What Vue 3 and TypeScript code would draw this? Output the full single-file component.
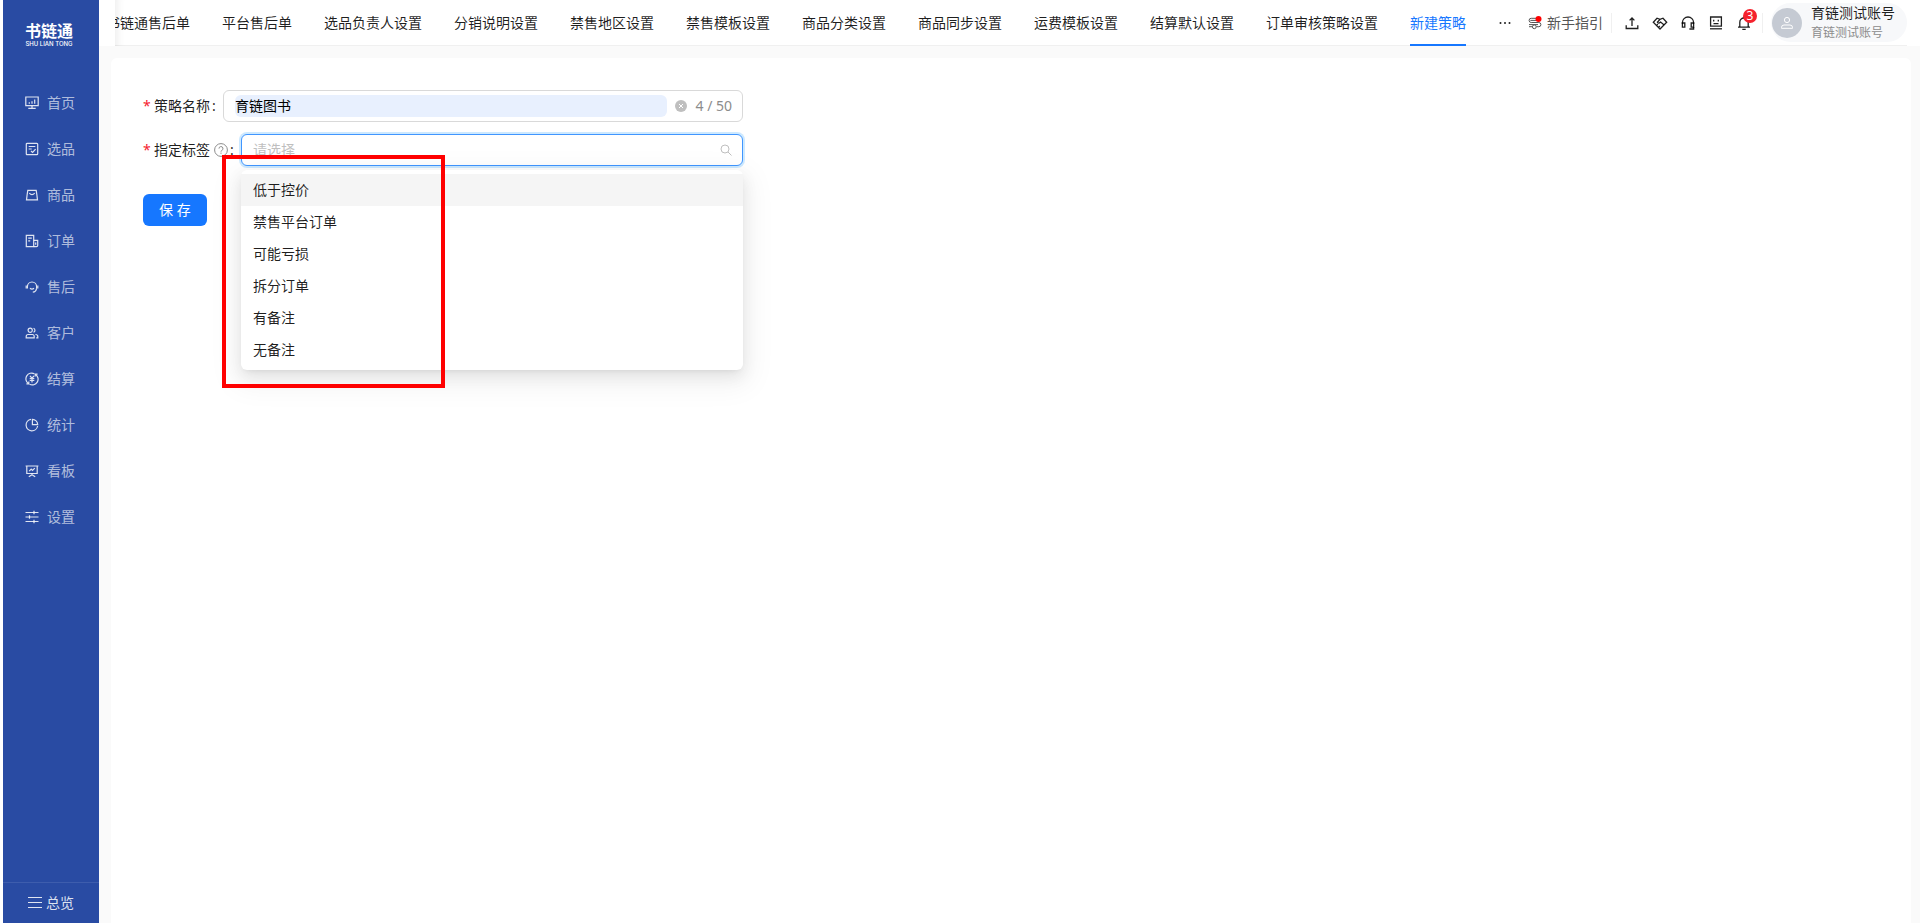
<script setup lang="ts">
import { ref } from 'vue'

interface MenuItem {
  label: string
  strokes: string[]
}

const menu: MenuItem[] = [
  {
    label: '首页',
    strokes: ['M.8 1h12.4v8.7H.8z', 'M4.3 6.3v1.4M7 5.3v2.4M9.7 3.5v4.2', 'M7 9.7v2.5M3.3 12.4h7.4'],
  },
  {
    label: '选品',
    strokes: ['M2.2 1.3h9.6q.9 0 .9.9v9.6q0 .9-.9.9H2.2q-.9 0-.9-.9V2.2q0-.9.9-.9z', 'M3.7 4.5h6.6M3.7 7h3', 'M6 9l1.6 1.5 3-3.4'],
  },
  {
    label: '商品',
    strokes: ['M2.8 2.3h8.4l.6 4 .7 5.6h-11l.7-5.6z', 'M4.3 5.2q2.7 3 5.4 0'],
  },
  {
    label: '订单',
    strokes: ['M1.3 1.3h7.4v11.4H1.3z', 'M8.7 6.3h4v5.2q0 1.2-1.2 1.2H8.7', 'M3.2 4.2h3.6M3.2 6.8h2', 'M10.7 8.6v2.2'],
  },
  {
    label: '售后',
    strokes: ['M2.4 8.4V6.6a4.6 4.6 0 0 1 9.2 0v1.8', 'M1.2 5.6v3M12.8 5.6v3', 'M11.6 8.4q-.5 3.6-3.8 3.8', 'M5 8.2q2 1.8 4 0'],
  },
  {
    label: '客户',
    strokes: ['M5.2 2.2a2.1 2.1 0 1 1 0 4.2a2.1 2.1 0 0 1 0-4.2z', 'M1.2 11.8v-1.4q0-1.9 1.9-1.9h4.2q1.9 0 1.9 1.9v1.4z', 'M8.5 2.3a2.1 2.1 0 0 1 0 4', 'M10.4 8.5q2.4 0 2.4 1.9v1.4h-1.6'],
  },
  {
    label: '结算',
    strokes: ['M3.4 11.6A5.8 5.8 0 0 1 9.4 1.7', 'M10.6 2.4A5.8 5.8 0 0 1 4.6 12.3', 'M1.4 11.9h2.4V9.5M12.6 2.1h-2.4v2.4', 'M5 3.8l2 2.4 2-2.4M4.7 6.6h4.6M4.7 8.5h4.6M7 6.4v4'],
  },
  {
    label: '统计',
    strokes: ['M6 1.3A5.8 5.8 0 1 0 12.6 8', 'M7.4 1.3a5.6 5.6 0 0 1 5.3 5.3H7.4z'],
  },
  {
    label: '看板',
    strokes: ['M.6 2h12.8M1.8 2v7.5h10.4V2', 'M4.2 7.2l2-2 1.3 1.3 2.3-2.3', 'M7 9.5v1.5M3.8 12.8l3.2-2.1 3.2 2.1'],
  },
  {
    label: '设置',
    strokes: ['M.5 2.5h13M.5 7h13M.5 11.5h13', 'M9 .8v3.4M4.5 5.3v3.4M9 9.8v3.4'],
  },
]

const tabs: string[] = [
  '书链通售后单',
  '平台售后单',
  '选品负责人设置',
  '分销说明设置',
  '禁售地区设置',
  '禁售模板设置',
  '商品分类设置',
  '商品同步设置',
  '运费模板设置',
  '结算默认设置',
  '订单审核策略设置',
  '新建策略',
]
const activeTab = ref('新建策略')

const tools: { name: string; strokes: string[] }[] = [
  { name: '上传', strokes: ['M2.2 10.2v3.3h11.6v-3.3', 'M8 11V3M5.6 5.4L8 3l2.4 2.4'] },
  { name: '合作', strokes: ['M8 14L1.3 7.3 5 3.2 8 4.4l3-1.2 3.7 4.1z', 'M8 4.4L5.4 7.2q1 1.9 3.2-.2l3.6 3', 'M6.6 12.2l1.2-1.2M4.6 10.4l1.3-1.3'] },
  { name: '客服', strokes: ['M2.4 9V7.6a5.6 5.6 0 0 1 11.2 0V9', 'M2.4 8h2.4v4.2H2.4zM11.2 8h2.4v4.2h-2.4z', 'M13.6 12v2H9.4'] },
  { name: '助手', strokes: ['M2.6 2h10.8v9.2H2.6z', 'M2 13.8h12', 'M5.7 4.8v1.7M10.3 4.8v1.7M5.5 8.6h5'] },
  { name: '通知', strokes: ['M3.8 12V7.2a4.2 4.2 0 0 1 8.4 0V12', 'M2 12.2h12M8 1.5v1.6M6.3 14.3h3.4'] },
]

const options: string[] = ['低于控价', '禁售平台订单', '可能亏损', '拆分订单', '有备注', '无备注']
const highlighted = ref(0)
const strategyName = ref('育链图书')
const tagQuery = ref('')
</script>

<template>
  <div class="app">
    <aside class="sidebar">
      <div class="logo">
        <span class="logo-name">书链通</span>
        <span class="logo-latin">SHU LIAN TONG</span>
      </div>
      <nav class="menu">
        <a v-for="item in menu" :key="item.label" href="#" class="menu-item">
          <svg class="menu-icon" viewBox="0 0 14 14" aria-hidden="true">
            <path v-for="d in item.strokes" :key="d" :d="d" />
          </svg>
          <span>{{ item.label }}</span>
        </a>
      </nav>
      <a href="#" class="overview">
        <svg class="overview-icon" viewBox="0 0 14 14" aria-hidden="true">
          <path d="M0 1.5h14M0 6.5h14M0 11.5h14" />
        </svg>
        <span>总览</span>
      </a>
    </aside>

    <div class="body">
      <header class="header">
        <div class="bar">
          <nav class="tabs">
            <div class="tab-track">
              <button
                v-for="tab in tabs"
                :key="tab"
                type="button"
                class="tab"
                :class="{ active: tab === activeTab }"
                @click="activeTab = tab"
              >{{ tab }}</button>
            </div>
          </nav>
          <button type="button" class="more" aria-label="更多">
            <svg viewBox="0 0 14 14" aria-hidden="true">
              <circle cx="2.5" cy="7" r="1" /><circle cx="7" cy="7" r="1" /><circle cx="11.5" cy="7" r="1" />
            </svg>
          </button>
          <a href="#" class="guide">
            <svg viewBox="0 0 14 14" aria-hidden="true">
              <path d="M8 2.3H3.2a2.1 2.1 0 0 0 0 4.2h7.6a2.1 2.1 0 0 1 0 4.2H8.4" />
              <path d="M2.4 4.4h6M1 8.6h9" />
              <circle cx="6.3" cy="10.8" r="1.9" />
              <path d="M1 10.7h3.4" />
              <circle class="guide-dot" cx="10.5" cy="3" r="3" />
            </svg>
            <span>新手指引</span>
          </a>
          <span class="divider"></span>
          <div class="tools">
            <button v-for="tool in tools" :key="tool.name" type="button" class="tool" :aria-label="tool.name">
              <svg viewBox="0 0 16 16" aria-hidden="true">
                <path v-for="d in tool.strokes" :key="d" :d="d" />
              </svg>
              <span v-if="tool.name === '通知'" class="badge">3</span>
            </button>
          </div>
          <span class="divider"></span>
          <button type="button" class="user">
            <span class="avatar">
              <svg viewBox="0 0 14 14" aria-hidden="true">
                <circle cx="7" cy="4" r="2.6" />
                <path d="M1.5 12.3v-.8q0-2.5 2.5-2.5h6q2.5 0 2.5 2.5v.8z" />
              </svg>
            </span>
            <span class="user-text">
              <span class="user-name">育链测试账号</span>
              <span class="user-sub">育链测试账号</span>
            </span>
          </button>
        </div>
      </header>

      <main class="card">
        <form class="form" @submit.prevent>
          <div class="row">
            <label class="label" for="strategy-name"><span class="star">*</span>策略名称<span class="colon">:</span></label>
            <div class="field">
              <input id="strategy-name" v-model="strategyName" class="name-input" type="text" maxlength="50" />
              <button type="button" class="clear" aria-label="清空" @click="strategyName = ''">
                <svg viewBox="0 0 12 12" aria-hidden="true">
                  <circle cx="6" cy="6" r="6" />
                  <path d="M4 4l4 4M8 4l-4 4" />
                </svg>
              </button>
              <span class="count">{{ strategyName.length }} / 50</span>
            </div>
          </div>

          <div class="row">
            <label class="label" for="tag-select">
              <span class="star">*</span>指定标签
              <svg class="help" viewBox="0 0 14 14" aria-hidden="true">
                <circle cx="7" cy="7" r="6.4" />
                <path d="M5 5.6a2 2 0 1 1 2.8 1.8q-.8.4-.8 1.2M7 9.6v1.2" />
              </svg>
              <span class="colon">:</span>
            </label>
            <div class="field focused">
              <input
                id="tag-select"
                v-model="tagQuery"
                class="tag-input"
                type="text"
                role="combobox"
                aria-expanded="true"
                aria-controls="tag-options"
                placeholder="请选择"
              />
              <svg class="search" viewBox="0 0 12 12" aria-hidden="true">
                <circle cx="5" cy="5" r="4" />
                <path d="M8 8l3.5 3.5" />
              </svg>
              <ul id="tag-options" class="dropdown" role="listbox">
                <li
                  v-for="(option, i) in options"
                  :key="option"
                  role="option"
                  class="option"
                  :class="{ hovered: i === highlighted }"
                  :aria-selected="i === highlighted"
                  @mouseenter="highlighted = i"
                >{{ option }}</li>
              </ul>
              <span class="marker"></span>
            </div>
          </div>

          <button type="submit" class="save">保 存</button>
        </form>
      </main>
    </div>
  </div>
</template>

<style>
body {
  margin: 0;
  background: #fff;
}
</style>

<style scoped>
.app {
  display: flex;
  box-sizing: border-box;
  min-height: 100vh;
  padding-left: 3px;
  font-family: "Noto Sans", "Noto Sans CJK SC", sans-serif;
  font-size: 14px;
  line-height: 22px;
  color: rgba(0, 0, 0, 0.88);
}
button,
input {
  font: inherit;
  color: inherit;
}
button {
  padding: 0;
  border: 0;
  background: none;
  cursor: pointer;
}
a {
  color: inherit;
  text-decoration: none;
}
svg {
  display: block;
  flex: none;
  fill: none;
  stroke: currentColor;
}

.sidebar {
  display: flex;
  flex: none;
  flex-direction: column;
  width: 96px;
  background: #294ba3;
  color: #fff;
}
.logo {
  display: flex;
  flex-direction: column;
  align-items: center;
  padding: 22px 4px 0 0;
}
.logo-name {
  font-size: 16px;
  font-weight: 700;
  line-height: 18px;
}
.logo-latin {
  font-family: Inter, sans-serif;
  font-size: 6px;
  font-weight: 500;
  line-height: 8px;
}
.menu {
  display: flex;
  flex: 1;
  flex-direction: column;
  padding-top: 32px;
}
.menu-item {
  display: flex;
  align-items: center;
  gap: 8px;
  height: 46px;
  padding-left: 22px;
  color: rgba(255, 255, 255, 0.65);
}
.menu-icon {
  width: 14px;
  height: 14px;
  stroke-width: 1.2;
  color: rgba(255, 255, 255, 0.85);
}
.overview {
  display: flex;
  align-items: center;
  gap: 4px;
  height: 40px;
  padding-left: 25px;
  border-top: 1px solid #3e5dad;
  color: rgba(255, 255, 255, 0.85);
}
.overview-icon {
  width: 14px;
  height: 14px;
}

.body {
  display: flex;
  flex: 1;
  flex-direction: column;
  min-width: 0;
  background: #fafafa;
}
.header {
  padding: 0 13px 0 16px;
  background: #fff;
}
.bar {
  display: flex;
  align-items: center;
  box-sizing: border-box;
  height: 46px;
  border-bottom: 1px solid #f0f0f0;
}
.tabs {
  flex: 1;
  min-width: 0;
  overflow: hidden;
  box-shadow: inset 10px 0 8px -8px rgba(0, 0, 0, 0.08);
}
.tab-track {
  display: flex;
  gap: 32px;
  margin-left: -9px;
}
.tab {
  flex: none;
  box-sizing: border-box;
  height: 46px;
  border-top: 2px solid transparent;
  border-bottom: 2px solid transparent;
  white-space: nowrap;
}
.tab.active {
  border-bottom-color: #1677ff;
  color: #1677ff;
}
.more {
  margin-right: 16px;
}
.more svg {
  width: 14px;
  height: 14px;
  fill: currentColor;
  stroke: none;
}
.guide {
  display: flex;
  align-items: center;
  gap: 5px;
  margin-right: 8px;
  color: #555;
}
.guide svg {
  width: 14px;
  height: 14px;
}
.guide .guide-dot {
  fill: #f00;
  stroke: none;
}
.divider {
  width: 1px;
  height: 20px;
  background: #f0f0f0;
}
.tools {
  display: flex;
  gap: 12px;
  padding: 0 10px 0 12px;
}
.tool {
  position: relative;
}
.tool svg {
  width: 16px;
  height: 16px;
  stroke-width: 1.3;
}
.badge {
  position: absolute;
  top: -6px;
  right: -5px;
  width: 14px;
  height: 14px;
  border-radius: 7px;
  background: #f5222d;
  color: #fff;
  font-size: 12px;
  line-height: 14px;
  text-align: center;
}
.user {
  display: flex;
  align-items: center;
  gap: 9px;
  box-sizing: border-box;
  height: 39px;
  margin-left: 8px;
  padding: 0 12px 0 1px;
  border-radius: 20px;
  background: #f7f8fa;
  text-align: left;
}
.avatar {
  display: flex;
  align-items: center;
  justify-content: center;
  width: 30px;
  height: 30px;
  border-radius: 50%;
  background: #c5cad3;
  color: #fff;
}
.avatar svg {
  width: 14px;
  height: 14px;
}
.user-text {
  display: flex;
  flex-direction: column;
}
.user-name,
.user-sub {
  line-height: 20px;
}
.user-sub {
  color: #8c8c8c;
  font-size: 12px;
}

.card {
  flex: 1;
  margin: 12px 9px 0 12px;
  padding: 32px;
  border-radius: 6px 6px 0 0;
  background: #fff;
}
.form {
  display: flex;
  flex-direction: column;
  gap: 12px;
  max-width: 600px;
}
.row {
  display: flex;
  align-items: center;
}
.label {
  display: flex;
  flex: none;
  align-items: center;
  padding-right: 8px;
}
.star {
  width: 11px;
  color: #f5222d;
}
.help {
  width: 14px;
  height: 14px;
  margin-left: 4px;
  color: #8c8c8c;
}
.colon {
  width: 3px;
  margin-left: 2px;
}
.field {
  position: relative;
  display: flex;
  flex: 1;
  align-items: center;
  box-sizing: border-box;
  min-width: 0;
  height: 32px;
  padding: 0 10px 0 11px;
  border: 1px solid #d9d9d9;
  border-radius: 6px;
  background: #fff;
}
.focused {
  border-color: #4096ff;
  box-shadow: 0 0 0 2px rgba(5, 145, 255, 0.2);
}
.name-input,
.tag-input {
  flex: 1;
  min-width: 0;
  height: 22px;
  padding: 0;
  border: 0;
  border-radius: 6px;
  outline: 0;
  background: transparent;
}
.name-input {
  background: #e8f0fe;
  color: #000;
}
.tag-input::placeholder {
  color: #bfbfbf;
  opacity: 1;
}
.clear {
  margin: 0 8px;
}
.clear svg {
  width: 12px;
  height: 12px;
  fill: #bfbfbf;
  stroke: none;
}
.clear path {
  stroke: #fff;
}
.count {
  color: #8c8c8c;
}
.search {
  width: 12px;
  height: 12px;
  color: #bfbfbf;
}
.dropdown {
  position: absolute;
  top: 35px;
  right: -1px;
  left: -1px;
  z-index: 1;
  margin: 0;
  padding: 4px 0;
  border-radius: 6px;
  background: #fff;
  box-shadow:
    0 6px 16px 0 rgba(0, 0, 0, 0.08),
    0 3px 6px -4px rgba(0, 0, 0, 0.12),
    0 9px 28px 8px rgba(0, 0, 0, 0.05);
  list-style: none;
}
.option {
  padding: 5px 12px;
}
.hovered {
  background: #f5f5f5;
}
.marker {
  position: absolute;
  top: 20px;
  left: -20px;
  z-index: 2;
  box-sizing: border-box;
  width: 223px;
  height: 233px;
  border: 4px solid #f00;
  pointer-events: none;
}
.save {
  align-self: flex-start;
  height: 32px;
  margin-top: 16px;
  padding: 0 16px;
  border-radius: 6px;
  background: #1677ff;
  color: #fff;
}
</style>
